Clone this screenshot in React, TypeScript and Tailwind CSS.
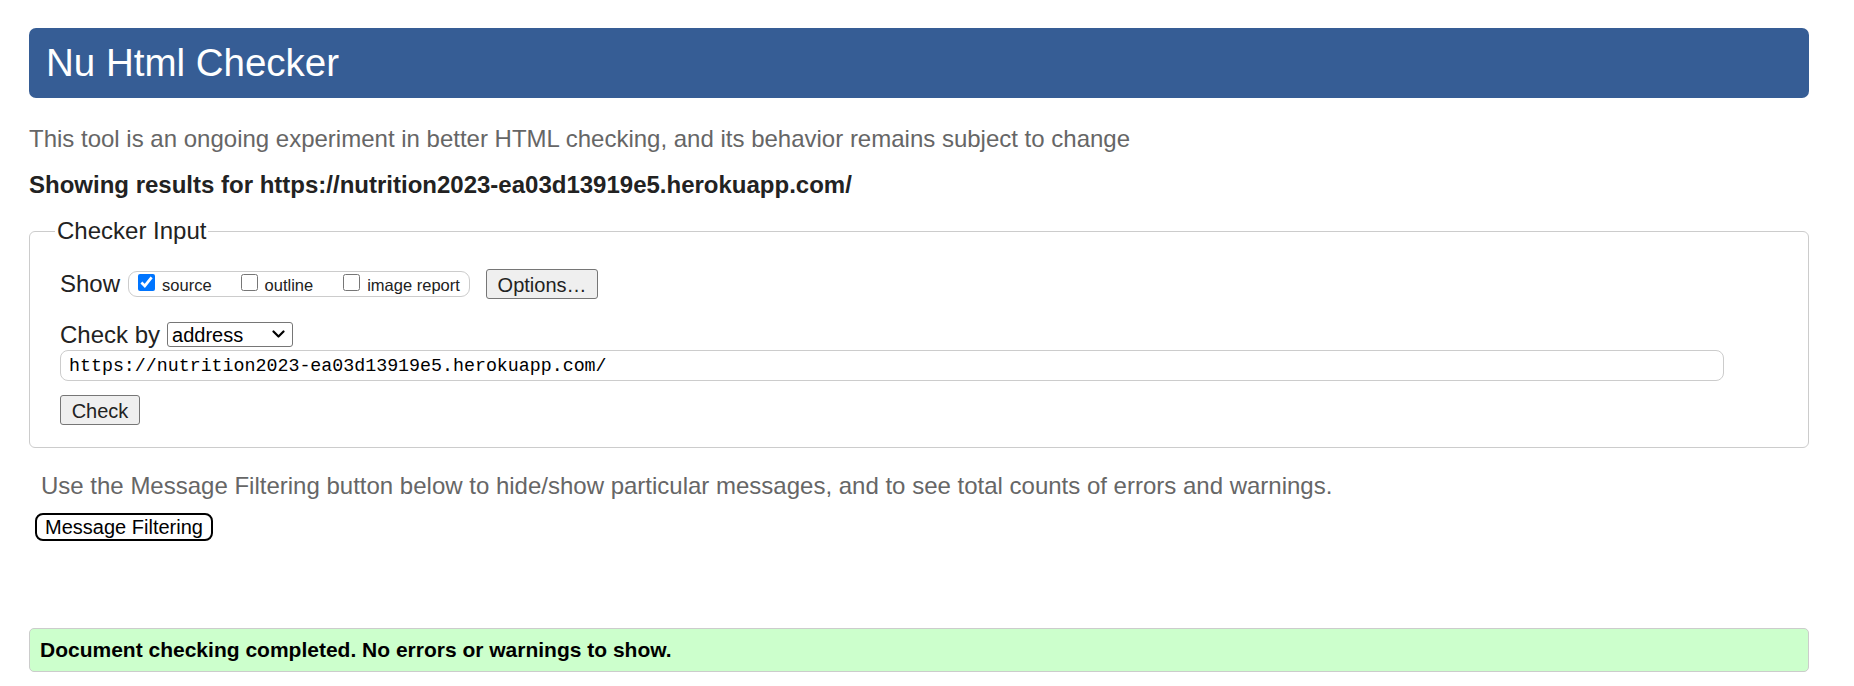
export default function App() {
  return (
    <div className="min-h-screen bg-white font-['Liberation_Sans',Arial,sans-serif] text-[#222]">
      <div className="w-[1780px] ml-[29px] pt-[28px]">
        {/* Header */}
        <header className="h-[70px] bg-[#365d95] rounded-[7px] flex items-center pl-[17px]">
          <h1 className="text-white text-[38.5px] leading-none">Nu Html Checker</h1>
        </header>

        <p className="mt-[27px] text-[24px] leading-[28px] text-[#666]">
          This tool is an ongoing experiment in better HTML checking, and its behavior remains subject to change
        </p>
        <p className="mt-[18px] text-[24px] leading-[28px] font-bold text-[#222]">
          Showing results for https://nutrition2023-ea03d13919e5.herokuapp.com/
        </p>

        {/* Checker input */}
        <fieldset className="mt-[18px] border border-[#ccc] rounded-[6px] pl-[30px] pt-[24px] pb-[22px]">
          <legend className="-ml-[5px] px-[2px] text-[24px] leading-[28px] text-[#222]">Checker Input</legend>

          <div className="flex items-center h-[30px]">
            <span className="text-[24px] leading-[28px]">Show</span>
            <div className="ml-[8px] h-[26px] w-[342px] border border-[#ccc] rounded-[9px] flex items-center pl-[9px] text-[16.5px]">
              <label className="flex items-center">
                <input type="checkbox" defaultChecked className="w-[17px] h-[17px] m-0 accent-[#0075ff] -translate-y-[2px]" />
                <span className="ml-[7px] translate-y-[1px]">source</span>
              </label>
              <label className="flex items-center ml-[29px]">
                <input type="checkbox" className="w-[17px] h-[17px] m-0 -translate-y-[2px]" />
                <span className="ml-[7px] translate-y-[1px]">outline</span>
              </label>
              <label className="flex items-center ml-[30px]">
                <input type="checkbox" className="w-[17px] h-[17px] m-0 -translate-y-[2px]" />
                <span className="ml-[7px] translate-y-[1px]">image report</span>
              </label>
            </div>
            <button className="ml-[16px] h-[30px] w-[112px] bg-[#efefef] border border-[#767676] rounded-[3px] text-[20px]">
              Options…
            </button>
          </div>

          <div className="mt-[23px] flex items-center h-[25px]">
            <span className="text-[24px] leading-[28px]">Check by</span>
            <div className="relative ml-[7px]">
              <select
                defaultValue="address"
                className="appearance-none block h-[25px] w-[126px] border border-[#767676] rounded-[3px] text-[20px] leading-none pl-[4px] bg-white text-black"
              >
                <option value="address">address</option>
                <option value="file">file upload</option>
                <option value="text">text input</option>
              </select>
              <svg
                className="pointer-events-none absolute right-[8px] top-[8px]"
                width="13"
                height="9"
                viewBox="0 0 13 9"
                fill="none"
              >
                <path d="M1.5 1.5 L6.5 6.5 L11.5 1.5" stroke="#000" strokeWidth="2.2" strokeLinecap="round" strokeLinejoin="round" />
              </svg>
            </div>
          </div>

          <input
            type="text"
            readOnly
            value="https://nutrition2023-ea03d13919e5.herokuapp.com/"
            className="mt-[3px] block h-[31px] w-[1664px] border border-[#ccc] rounded-[8px] pl-[8px] text-[18.3px] font-['Liberation_Mono',monospace] text-black outline-none"
          />

          <button className="mt-[14px] block h-[30px] w-[80px] bg-[#efefef] border border-[#767676] rounded-[3px] text-[20px]">
            Check
          </button>
        </fieldset>

        <p className="mt-[24px] ml-[12px] text-[24px] leading-[28px] text-[#666]">
          Use the Message Filtering button below to hide/show particular messages, and to see total counts of errors and warnings.
        </p>
        <button className="mt-[13px] ml-[6px] block h-[28px] w-[178px] bg-white border-2 border-black rounded-[8px] text-[20px] leading-none text-black">
          Message Filtering
        </button>

        <div className="mt-[87px] h-[44px] bg-[#ccffcc] border border-[#ccc] rounded-[5px] flex items-center pl-[10px]">
          <p className="text-[21px] font-bold text-black">Document checking completed. No errors or warnings to show.</p>
        </div>
      </div>
    </div>
  )
}
